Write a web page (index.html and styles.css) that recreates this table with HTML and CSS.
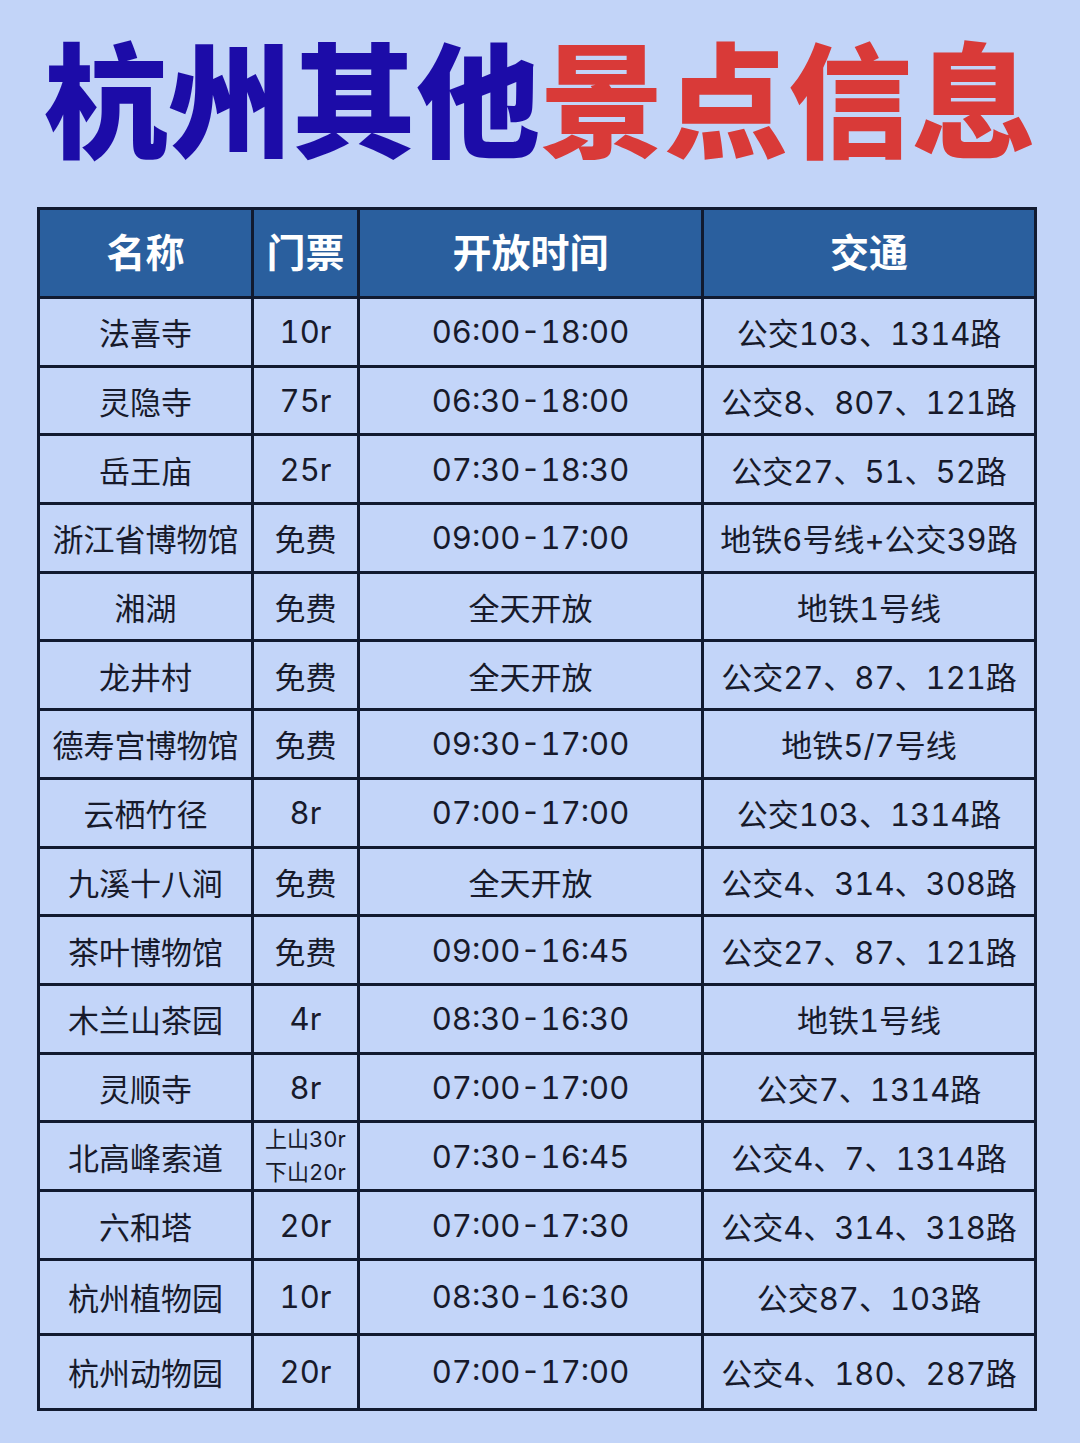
FILE: index.html
```html
<!DOCTYPE html>
<html lang="zh-CN">
<head>
<meta charset="utf-8">
<title>杭州其他景点信息</title>
<link rel="stylesheet" href="styles.css">
</head>
<body>
<div class="page">
  <h1 class="title"><span class="blue">杭州其他</span><span class="red">景点信息</span></h1>
  <table class="info">
    <colgroup>
      <col class="c1"><col class="c2"><col class="c3"><col class="c4">
    </colgroup>
    <thead>
      <tr><th>名称</th><th>门票</th><th>开放时间</th><th>交通</th></tr>
    </thead>
    <tbody>
      <tr><td>法喜寺</td><td>10r</td><td>06:00-18:00</td><td>公交103、1314路</td></tr>
      <tr><td>灵隐寺</td><td>75r</td><td>06:30-18:00</td><td>公交8、807、121路</td></tr>
      <tr><td>岳王庙</td><td>25r</td><td>07:30-18:30</td><td>公交27、51、52路</td></tr>
      <tr><td>浙江省博物馆</td><td>免费</td><td>09:00-17:00</td><td>地铁6号线+公交39路</td></tr>
      <tr><td>湘湖</td><td>免费</td><td>全天开放</td><td>地铁1号线</td></tr>
      <tr><td>龙井村</td><td>免费</td><td>全天开放</td><td>公交27、87、121路</td></tr>
      <tr><td>德寿宫博物馆</td><td>免费</td><td>09:30-17:00</td><td>地铁5/7号线</td></tr>
      <tr><td>云栖竹径</td><td>8r</td><td>07:00-17:00</td><td>公交103、1314路</td></tr>
      <tr><td>九溪十八涧</td><td>免费</td><td>全天开放</td><td>公交4、314、308路</td></tr>
      <tr><td>茶叶博物馆</td><td>免费</td><td>09:00-16:45</td><td>公交27、87、121路</td></tr>
      <tr><td>木兰山茶园</td><td>4r</td><td>08:30-16:30</td><td>地铁1号线</td></tr>
      <tr><td>灵顺寺</td><td>8r</td><td>07:00-17:00</td><td>公交7、1314路</td></tr>
      <tr><td>北高峰索道</td><td class="small">上山30r<br>下山20r</td><td>07:30-16:45</td><td>公交4、7、1314路</td></tr>
      <tr><td>六和塔</td><td>20r</td><td>07:00-17:30</td><td>公交4、314、318路</td></tr>
      <tr class="tall"><td>杭州植物园</td><td>10r</td><td>08:30-16:30</td><td>公交87、103路</td></tr>
      <tr class="tall"><td>杭州动物园</td><td>20r</td><td>07:00-17:00</td><td>公交4、180、287路</td></tr>
    </tbody>
  </table>
</div>
</body>
</html>
```

FILE: styles.css
```css
html, body {
  margin: 0;
  padding: 0;
  background: #c2d4f8;
}
.page {
  width: 1080px;
  height: 1443px;
  background: #c2d4f8;
  font-family: "Noto Sans CJK SC", "Noto Sans", sans-serif;
}
.title {
  margin: 0;
  height: 207px;
  display: flex;
  justify-content: center;
  align-items: center;
  padding-bottom: 20px;
  box-sizing: border-box;
  font-size: 124px;
  font-weight: 900;
  line-height: 1;
  letter-spacing: 0;
  white-space: nowrap;
}
.blue { color: #1c0ca8; }
.red { color: #d93a38; }

.info {
  margin-left: 37px;
  width: 997px;
  table-layout: fixed;
  border-collapse: collapse;
  border: 3px solid #111a30;
}
.c1 { width: 214px; }
.c2 { width: 106px; }
.c3 { width: 344px; }
.c4 { width: 333px; }

.info th, .info td {
  border: 3px solid #111a30;
  text-align: center;
  vertical-align: middle;
  padding: 0;
  white-space: nowrap;
}
.info th {
  height: 89px;
  padding-bottom: 6px;
  box-sizing: border-box;
  background: #2a5f9e;
  color: #ffffff;
  font-size: 39px;
  font-weight: 700;
}
.info td {
  height: 65.7px;
  background: #c3d5f9;
  color: #171a2b;
  font-family: "Inter", "Noto Sans CJK SC", sans-serif;
  font-feature-settings: "tnum" 1;
  font-size: 31px;
  font-weight: 400;
  letter-spacing: 0;
}
.info tr.tall td {
  height: 72px;
}
.info td.small {
  font-size: 22px;
  line-height: 33px;
  letter-spacing: 0;
}
```
